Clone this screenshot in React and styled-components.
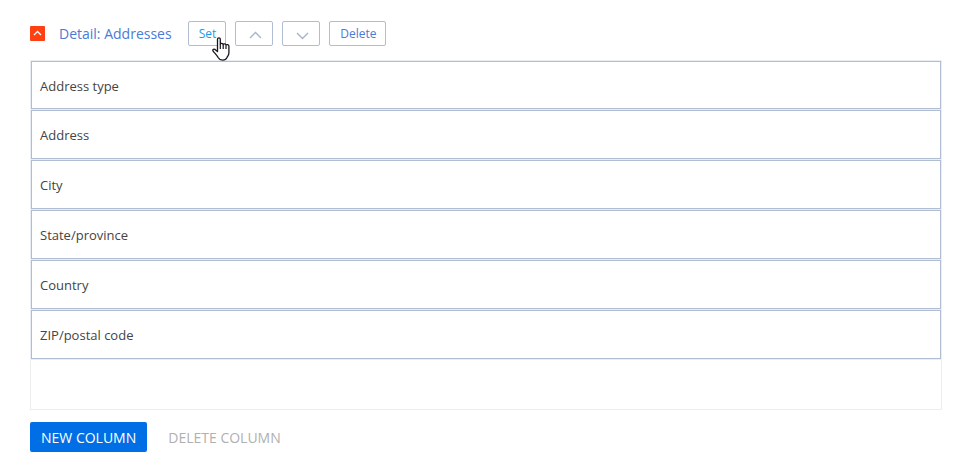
import React from "react";
import styled, { createGlobalStyle } from "styled-components";

const GlobalStyle = createGlobalStyle`
  * {
    box-sizing: border-box;
  }
  body {
    margin: 0;
    background: #ffffff;
    color: #444444;
    font-family: "Open Sans", "Noto Sans", sans-serif;
    font-size: 13px;
  }
  button {
    font-family: inherit;
    cursor: pointer;
  }
`;

const Page = styled.main`
  padding: 21px 31px 23px 30px;
`;

const Header = styled.header`
  display: flex;
  align-items: center;
  height: 25px;
`;

const CollapseButton = styled.button`
  display: flex;
  flex: none;
  width: 15px;
  height: 15px;
  padding: 0;
  border: 0;
  border-radius: 1px;
  background: #ff4013;
`;

const Title = styled.h1`
  margin: 0 16px 0 14px;
  color: #4a7bd5;
  font-size: 14px;
  font-weight: 400;
  line-height: 20px;
  white-space: nowrap;
`;

const Toolbar = styled.div`
  display: flex;
  gap: 9px;
`;

const ToolButton = styled.button`
  position: relative;
  display: flex;
  align-items: center;
  justify-content: center;
  min-width: 38px;
  height: 25px;
  padding: 0 9px 0 10px;
  border: 1px solid #b1bdd3;
  border-radius: 2px;
  background: #ffffff;
  color: ${({ $active }) => ($active ? "#1a9ae6" : "#4a7bd5")};
  font-size: 12px;
  line-height: 16px;
`;

const Pointer = styled.svg`
  position: absolute;
  top: 15px;
  left: 23px;
  z-index: 1;
  pointer-events: none;
`;

const ColumnList = styled.ul`
  display: flex;
  flex-direction: column;
  gap: 1px;
  margin: 14px 0 12px;
  padding: 0 0 50px;
  border: 1px solid #ededed;
  list-style: none;
`;

const ColumnRow = styled.li`
  display: flex;
  align-items: center;
  height: 49px;
  padding: 0 8px;
  border: 1px solid #b1bdd3;
  box-shadow: 0 0 0 1px #e9edf5;
  line-height: 18px;

  &:first-child {
    height: 48px;
    padding-top: 2px;
  }
`;

const Footer = styled.footer`
  display: flex;
  gap: 10px;
`;

const ActionButton = styled.button`
  height: 30px;
  padding: 2px 11px 0;
  border: 0;
  border-radius: 2px;
  background: ${({ $primary }) => ($primary ? "#006ee5" : "transparent")};
  color: ${({ $primary }) => ($primary ? "#ffffff" : "#b0b0b0")};
  font-size: 14px;
  line-height: 20px;
  white-space: nowrap;
`;

const columns = [
  "Address type",
  "Address",
  "City",
  "State/province",
  "Country",
  "ZIP/postal code",
];

function HandPointer() {
  return (
    <Pointer width="18" height="24" viewBox="0 0 18 24" aria-hidden="true">
      <path
        d="M5.500 14.500V2.200a1.400 1.400 0 0 1 2.800 0V7c.3-1 2.600-1 2.900.5.400-1 2.400-.8 2.800.6.500-.9 2.900-.6 2.900 1V16c0 2.500-1.400 3-1.900 4.500-1.500 3.500-7 3.500-8.700.3C5.500 19 3.500 17 1.300 14.300c-1.200-1.500.2-2.700 1.700-1.900z"
        fill="#ffffff"
        stroke="#16161f"
        strokeWidth="1.300"
        strokeLinejoin="round"
      />
      <path d="M8.300 7v5M11.200 7.500V12M14 8.500V12" stroke="#16161f" strokeWidth="1.200" />
    </Pointer>
  );
}

function Chevron({ down }) {
  return (
    <svg width="14" height="25" viewBox="0 0 14 25" fill="none" aria-hidden="true">
      <path
        d={down ? "M2 12 7.500 17.500 13 12" : "M2 17 7.500 11.500 13 17"}
        stroke="#a7b3cc"
        strokeWidth="1.400"
      />
    </svg>
  );
}

export default function App() {
  return (
    <>
      <GlobalStyle />
      <Page>
        <Header>
          <CollapseButton type="button" aria-label="Collapse detail">
            <svg width="15" height="15" viewBox="0 0 15 15" fill="none" aria-hidden="true">
              <path d="M4 9 7.500 5.500 11 9" stroke="#ffffff" strokeWidth="1.300" />
            </svg>
          </CollapseButton>
          <Title>Detail: Addresses</Title>
          <Toolbar>
            <ToolButton type="button" $active>
              Set
              <HandPointer />
            </ToolButton>
            <ToolButton type="button" aria-label="Move up">
              <Chevron />
            </ToolButton>
            <ToolButton type="button" aria-label="Move down">
              <Chevron down />
            </ToolButton>
            <ToolButton type="button">Delete</ToolButton>
          </Toolbar>
        </Header>
        <ColumnList>
          {columns.map((name) => (
            <ColumnRow key={name}>{name}</ColumnRow>
          ))}
        </ColumnList>
        <Footer>
          <ActionButton type="button" $primary>
            NEW COLUMN
          </ActionButton>
          <ActionButton type="button">DELETE COLUMN</ActionButton>
        </Footer>
      </Page>
    </>
  );
}
